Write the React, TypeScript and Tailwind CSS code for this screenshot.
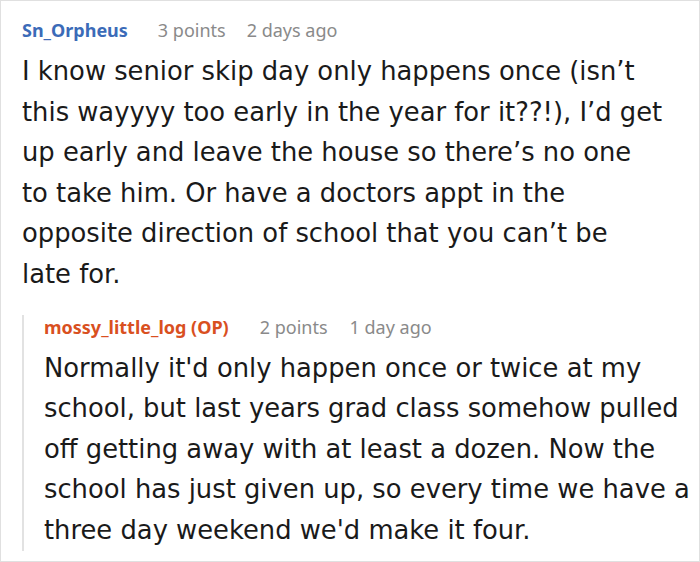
const parentLines = [
  'I know senior skip day only happens once (isn’t',
  'this wayyyy too early in the year for it??!), I’d get',
  'up early and leave the house so there’s no one',
  'to take him. Or have a doctors appt in the',
  'opposite direction of school that you can’t be',
  'late for.',
];

const replyLines = [
  "Normally it'd only happen once or twice at my",
  'school, but last years grad class somehow pulled',
  'off getting away with at least a dozen. Now the',
  'school has just given up, so every time we have a',
  "three day weekend we'd make it four.",
];

export default function App() {
  return (
    <div className="w-[700px] h-[562px] bg-white border border-[#e0e0e0] pl-[21px] pr-[20px] text-[#1a1a1a] overflow-hidden">
      {/* Parent comment */}
      <div className="pt-[17px]">
        <div className="flex items-center text-[18px] leading-[24px] font-['Noto_Sans',sans-serif]">
          <span className="font-bold text-[#3b6bb8]">Sn_Orpheus</span>
          <span className="ml-[30px] text-[#8a8a8a]">3 points</span>
          <span className="ml-[21px] text-[#8a8a8a]">2 days ago</span>
        </div>
        <p className="mt-[9px] text-[25.8px] leading-[40.6px] whitespace-nowrap font-['DejaVu_Sans',sans-serif]">
          {parentLines.map((line, i) => (
            <span key={i} className="block">{line}</span>
          ))}
        </p>
      </div>

      {/* Reply */}
      <div className="mt-[20px] border-l-2 border-[#e2e2e2] pl-[20px]">
        <div className="flex items-center text-[18px] leading-[24px] font-['Noto_Sans',sans-serif]">
          <span className="font-bold text-[#d9501f]">mossy_little_log (OP)</span>
          <span className="ml-[31px] text-[#8a8a8a]">2 points</span>
          <span className="ml-[22px] text-[#8a8a8a]">1 day ago</span>
        </div>
        <p className="mt-[9px] -mb-[7px] text-[25.8px] leading-[40.6px] whitespace-nowrap font-['DejaVu_Sans',sans-serif]">
          {replyLines.map((line, i) => (
            <span key={i} className="block">{line}</span>
          ))}
        </p>
      </div>
    </div>
  );
}
